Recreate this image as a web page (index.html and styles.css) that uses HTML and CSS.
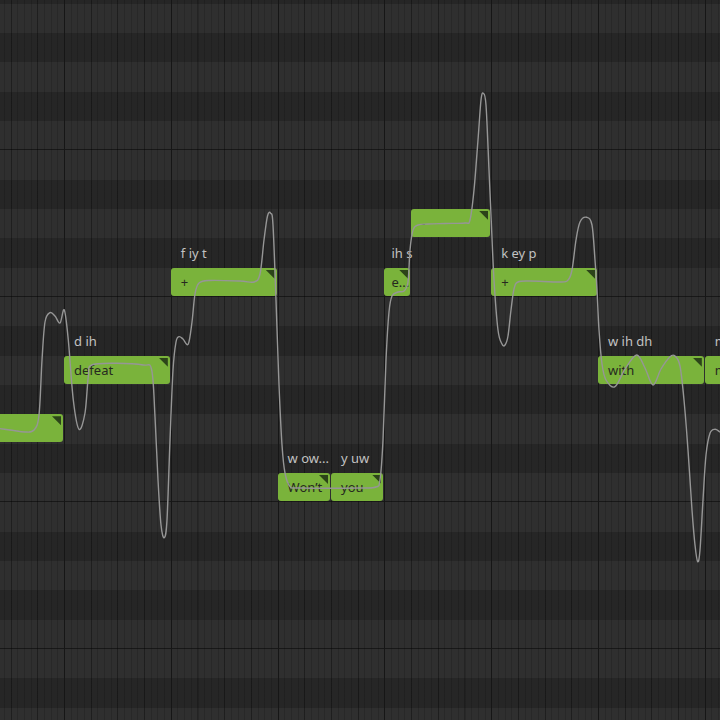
FILE: index.html
```html
<!DOCTYPE html>
<html>
<head>
<meta charset="utf-8">
<title>Piano roll</title>
<link rel="stylesheet" href="styles.css">
</head>
<body>
<div class="roll">
  <div class="note" style="left:-42.8px;top:414.33px;width:105.8px"><span class="phon">w ih</span><span class="lyric"></span><span class="flag"></span></div>
  <div class="note" style="left:64px;top:355.67px;width:105.8px"><span class="phon">d ih</span><span class="lyric">defeat</span><span class="flag"></span></div>
  <div class="note" style="left:170.8px;top:267.67px;width:105.8px"><span class="phon">f iy t</span><span class="lyric">+</span><span class="flag"></span></div>
  <div class="note" style="left:277.6px;top:473px;width:52.4px"><span class="phon">w ow...</span><span class="lyric">Won’t</span><span class="flag"></span></div>
  <div class="note" style="left:331px;top:473px;width:52.4px"><span class="phon">y uw</span><span class="lyric">you</span><span class="flag"></span></div>
  <div class="note narrow" style="left:384.4px;top:267.67px;width:25.7px"><span class="phon">ih s</span><span class="lyric">e...</span><span class="flag"></span></div>
  <div class="note" style="left:411.1px;top:209px;width:79.1px"><span class="lyric">-</span><span class="flag"></span></div>
  <div class="note" style="left:491.2px;top:267.67px;width:105.8px"><span class="phon">k ey p</span><span class="lyric">+</span><span class="flag"></span></div>
  <div class="note" style="left:598px;top:355.67px;width:105.8px"><span class="phon">w ih dh</span><span class="lyric">with</span><span class="flag"></span></div>
  <div class="note" style="left:704.8px;top:355.67px;width:105.8px"><span class="phon">m iy</span><span class="lyric">me</span><span class="flag"></span></div>
  <svg class="pitch" width="720" height="720" viewBox="0 0 720 720"><path id="curve" d=""/></svg>
</div>
<script src="script.js"></script>
</body>
</html>
```
FILE: styles.css
```css
html, body {
  margin: 0;
  padding: 0;
  background: #262626;
}
.roll {
  position: relative;
  width: 720px;
  height: 720px;
  overflow: hidden;
  font-family: "Noto Sans", "Open Sans", sans-serif;
  background-image:
    repeating-linear-gradient(90deg, #161616 64px 65px, transparent 65px 170.8px),
    repeating-linear-gradient(90deg, rgba(0,0,0,0.24) 64px 65px, transparent 65px 90.7px),
    repeating-linear-gradient(90deg, rgba(0,0,0,0.15) 64px 65px, transparent 65px 70.675px),
    repeating-linear-gradient(180deg,
      #2f2f2f -55px -25.67px,
      #262626 -25.67px 3.67px,
      #2f2f2f 3.67px 33px,
      #262626 33px 62.33px,
      #2f2f2f 62.33px 91.67px,
      #262626 91.67px 121px,
      #2f2f2f 121px 149.33px,
      #181818 149.33px 150.33px,
      #2f2f2f 150.33px 179.67px,
      #262626 179.67px 209px,
      #2f2f2f 209px 238.33px,
      #262626 238.33px 267.67px,
      #2f2f2f 267.67px 296px,
      #181818 296px 297px);
}
.note {
  position: absolute;
  height: 28px;
  box-sizing: border-box;
  background: #7ab33b;
  border-radius: 3px;
  display: flex;
  align-items: center;
  padding-left: 10px;
}
.note.narrow {
  padding-left: 7px;
}
.lyric {
  font-size: 13px;
  line-height: 16px;
  color: #26291f;
  white-space: nowrap;
}
.phon {
  position: absolute;
  left: 10px;
  top: -23px;
  font-size: 13px;
  line-height: 16px;
  color: #c2c2c2;
  white-space: nowrap;
}
.note.narrow .phon {
  left: 7px;
}
.flag {
  position: absolute;
  top: 2px;
  right: 2px;
  width: 9px;
  height: 9px;
  background: #2c4419;
  clip-path: polygon(0 0, 100% 0, 100% 100%);
}
.pitch {
  position: absolute;
  left: 0;
  top: 0;
  pointer-events: none;
}
.pitch path {
  fill: none;
  stroke: #969696;
  stroke-width: 1.4;
  stroke-linejoin: round;
  stroke-linecap: round;
}
```
FILE: script.js
```js
var pts = [
  [-5,428],[10,430],[25,432],[34,430],[39,415],[42,360],[45,322],[50,312.7],[55,316],[60,323],[64.3,310],[68.3,340],[73.3,400],[79,429.3],[85,413],[88.3,376.7],[91.7,365],[116.7,363.3],[143.3,365],[151.7,370],[155,416.7],[158,480],[161,525],[164.3,537.7],[167,520],[170,440],[173,370],[176,342],[179,336.7],[183,339],[188.3,344],[192,322],[195,294],[199,283],[210,280.5],[240,281],[254,282],[260,274],[264,240],[267.5,216],[270.7,213.3],[273,225],[276,300],[279,385],[282,445],[285,473],[290,486.5],[300,488],[360,488],[376,487],[380,480],[383,440],[386,360],[389,312],[392,296],[398,292],[404,291],[408,282],[410,250],[413,230],[418,225],[428,224],[445,223.5],[465,223],[470,220],[474,190],[478,140],[481,100],[483.3,93.3],[486,105],[489,170],[491,215],[494,280],[498,330],[502,344],[505,345],[508,336],[511,310],[514,289],[518,282],[530,281],[560,282],[568,280],[572,270],[576,240],[580,222],[586.7,217.3],[592,225],[595,260],[597,290],[599,330],[602,364],[606,380],[615,386.7],[625,369],[636.7,355],[645,368],[653,385],[661,369],[670,356.7],[675,356],[680,366],[684,400],[688,450],[692,510],[695,545],[697.7,561.7],[700,550],[703,500],[706,455],[710,433.3],[715,429.3],[720,432],[725,435]
];
function buildPath(p) {
  var d = 'M' + p[0][0] + ',' + p[0][1];
  for (var i = 0; i < p.length - 1; i++) {
    var p0 = p[i - 1] || p[i];
    var p1 = p[i];
    var p2 = p[i + 1];
    var p3 = p[i + 2] || p[i + 1];
    var c1x = p1[0] + (p2[0] - p0[0]) / 6;
    var c1y = p1[1] + (p2[1] - p0[1]) / 6;
    var c2x = p2[0] - (p3[0] - p1[0]) / 6;
    var c2y = p2[1] - (p3[1] - p1[1]) / 6;
    d += ' C' + c1x.toFixed(2) + ',' + c1y.toFixed(2) + ' ' + c2x.toFixed(2) + ',' + c2y.toFixed(2) + ' ' + p2[0] + ',' + p2[1];
  }
  return d;
}
document.getElementById('curve').setAttribute('d', buildPath(pts));
```
